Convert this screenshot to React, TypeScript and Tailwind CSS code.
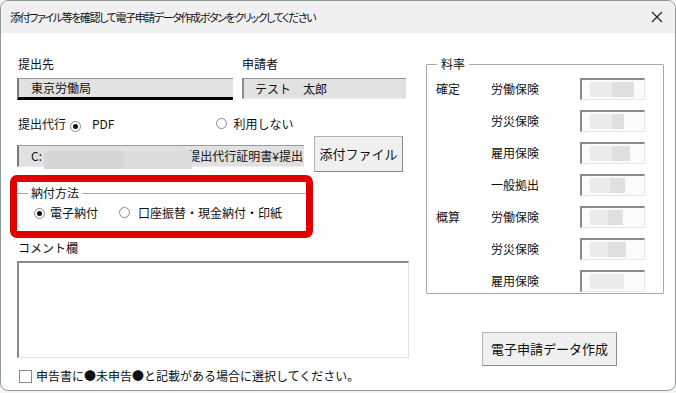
import React from "react";

const F = "font-['Noto_Sans_CJK_JP',sans-serif]";

function Radio({ checked }: { checked?: boolean }) {
  return (
    <span className="relative inline-flex w-[11px] h-[11px] rounded-full border border-[#8a8a8a] bg-white items-center justify-center shrink-0">
      {checked && <span className="w-[5px] h-[5px] rounded-full bg-[#111]" />}
    </span>
  );
}

function Blur({ w1, w2 }: { w1: number; w2: number }) {
  return (
    <div className="flex h-[15px]">
      <div className="bg-[#ececec] h-full" style={{ width: w1 }} />
      <div className="bg-[#e0e0e0] h-full" style={{ width: w2 }} />
    </div>
  );
}

function RateRow({ cat, label, w1, w2 }: { cat?: string; label: string; w1: number; w2: number }) {
  return (
    <div className="flex items-center h-[32px]">
      <div className="w-[64px] pl-[9px]">{cat}</div>
      <div className="w-[89px]">{label}</div>
      <div className="w-[65px] h-[22px] bg-[#fbfbfb] border-t-2 border-l-2 border-t-[#8a8a8a] border-l-[#8a8a8a] border-r border-b border-r-[#e6e6e6] border-b-[#e6e6e6] flex items-center pl-[8px]">
        <Blur w1={w1} w2={w2} />
      </div>
    </div>
  );
}

export default function App() {
  return (
    <div className={`w-[676px] h-[393px] bg-[#f4f6f4] ${F} text-[12px] text-[#111] leading-[18px]`}>
      <div className="w-[676px] h-[391px] border border-[#8f9a92] rounded-[8px] overflow-hidden bg-white flex flex-col">
        {/* title bar */}
        <div className="h-[32px] bg-[#f0f0f0] flex items-center pl-[9px] pr-[8px] shrink-0">
          <span className="text-[11px] tracking-[-1.4px] text-[#111] [font-feature-settings:'palt']">添付ファイル等を確認して電子申請データ作成ボタンをクリックしてください</span>
          <span className="ml-auto w-[20px] flex justify-center">
            <svg width="12" height="12" viewBox="0 0 12 12">
              <path d="M1 1 L11 11 M11 1 L1 11" stroke="#222" strokeWidth="1.2" />
            </svg>
          </span>
        </div>
        {/* body */}
        <div className="flex pl-[16px]">
          {/* left column */}
          <div className="w-[392px] flex flex-col">
            <div className="flex mt-[22px] gap-[9px]">
              <div className="w-[216px] flex flex-col">
                <div className="h-[18px] pl-[1px]">提出先</div>
                <div className="mt-[5px] h-[22px] bg-[#e1e1e1] border-l-2 border-t border-l-[#7a7a7a] border-t-[#9a9a9a] border-b-[3px] border-b-black flex items-center pl-[12px]">
                  東京労働局
                </div>
              </div>
              <div className="w-[164px] flex flex-col">
                <div className="h-[18px]">申請者</div>
                <div className="mt-[5px] h-[21px] bg-[#e1e1e1] border-l-2 border-t border-l-[#8a8a8a] border-t-[#9a9a9a] border-b border-b-[#ececec] flex items-center pl-[11px]">
                  テスト　太郎
                </div>
              </div>
            </div>
            <div className="flex items-center mt-[15px] h-[18px]">
              <span className="pl-[1px]">提出代行</span>
              <span className="ml-[4px]"><Radio checked /></span>
              <span className="ml-[11px]">PDF</span>
              <span className="ml-[101px]"><Radio /></span>
              <span className="ml-[7px]">利用しない</span>
            </div>
            <div className="flex items-start">
              <div className="mt-[12px] w-[287px] h-[22px] bg-[#e1e1e1] border-l-2 border-t border-l-[#7a7a7a] border-t-[#9a9a9a] border-b border-b-[#ececec] flex items-center pl-[12px] relative">
                <span>C:</span>
                <div className="absolute left-[25px] top-[5px] flex h-[18px]">
                  <div className="w-[80px] bg-[#d6d6d6]" />
                  <div className="w-[68px] bg-[#dcdcdc]" />
                </div>
                <span className="ml-auto pr-[1px]">提出代行証明書¥提出</span>
              </div>
              <div className="mt-[3px] ml-[10px] w-[89px] h-[36px] bg-[#f0f0f0] border border-[#b4b4b4] border-b-[#8a8a8a] border-r-[#8a8a8a] flex items-center justify-center text-[13px]">
                添付ファイル
              </div>
            </div>
            {/* red box */}
            <div className="mt-[3px] -ml-[7px] w-[303px] h-[63px] border-[7px] border-[#e00000] rounded-[7px] pt-[3px]">
              <fieldset className="border-t border-[#a8a8a8] h-full">
                <legend className="ml-[11px] px-[3px] leading-[16px]">納付方法</legend>
                <div className="flex items-center pl-[17px] mt-[3px]">
                  <Radio checked />
                  <span className="ml-[5px]">電子納付</span>
                  <span className="ml-[21px]"><Radio /></span>
                  <span className="ml-[8px]">口座振替・現金納付・印紙</span>
                </div>
              </fieldset>
            </div>
            <div className="mt-[1px] h-[18px] pl-[1px]">コメント欄</div>
            <div className="mt-[4px] w-[392px] h-[97px] bg-white border-t-2 border-l-2 border-t-[#8a8a8a] border-l-[#8a8a8a] border-r border-b border-r-[#e3e3e3] border-b-[#e3e3e3]" />
            <div className="flex items-center mt-[9px]">
              <span className="ml-[2px] w-[13px] h-[13px] border border-[#8a8a8a] bg-white" />
              <span className="ml-[4px]">申告書に●未申告●と記載がある場合に選択してください。</span>
            </div>
          </div>
          {/* right column */}
          <div className="ml-[17px] flex flex-col">
            <fieldset className="mt-[23px] w-[238px] h-[238px] border border-[#a8a8a8] rounded-[1px] pt-[1px]">
              <legend className="ml-[10px] px-[4px] leading-[16px]">料率</legend>
              <RateRow cat="確定" label="労働保険" w1={22} w2={22} />
              <RateRow label="労災保険" w1={22} w2={12} />
              <RateRow label="雇用保険" w1={22} w2={18} />
              <RateRow label="一般拠出" w1={20} w2={15} />
              <RateRow cat="概算" label="労働保険" w1={18} w2={15} />
              <RateRow label="労災保険" w1={18} w2={18} />
              <RateRow label="雇用保険" w1={34} w2={0} />
            </fieldset>
            <div className="ml-[56px] mt-[38px] w-[135px] h-[34px] bg-[#f0f0f0] border border-[#b4b4b4] border-b-[#8a8a8a] border-r-[#8a8a8a] flex items-center justify-center text-[13px]">
              電子申請データ作成
            </div>
          </div>
        </div>
      </div>
    </div>
  );
}
